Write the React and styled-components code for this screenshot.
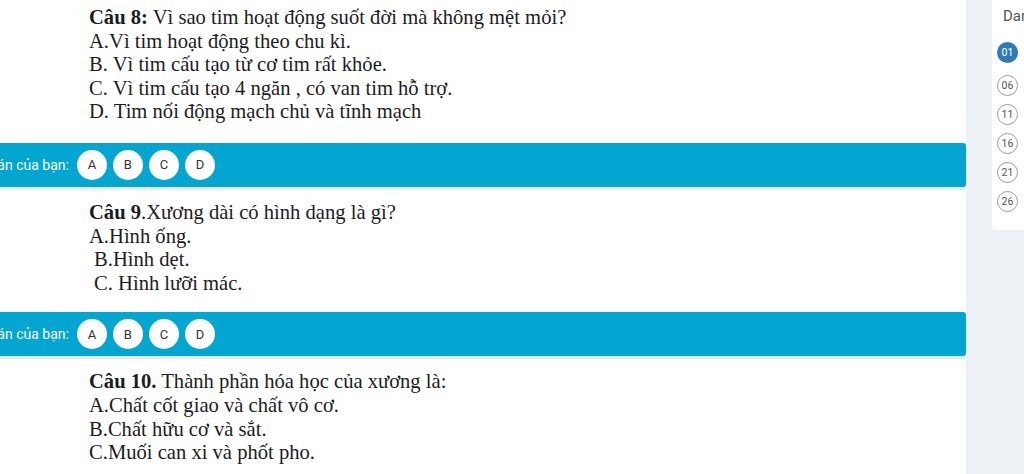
import React from "react";
import styled, { createGlobalStyle } from "styled-components";

const Global = createGlobalStyle`
  html, body { margin: 0; padding: 0; background: #ffffff; }
  body { width: 1024px; height: 474px; overflow: hidden; }
  #root { width: 1024px; height: 474px; }
`;

const Page = styled.div`
  display: flex;
  width: 1024px;
  height: 474px;
  overflow: hidden;
`;

const Main = styled.main`
  width: 966px;
  flex: none;
  background: #ffffff;
  overflow: hidden;
`;

const Inner = styled.div`
  margin-left: -31px;
  display: flex;
  flex-direction: column;
`;

const Question = styled.section`
  padding: ${(p) => p.$pt}px 0 ${(p) => p.$pb}px 120px;
  font-family: "Liberation Serif", "Times New Roman", serif;
  font-size: 20.6px;
  line-height: 23.6px;
  color: #1c1c1c;
`;

const Line = styled.div`
  padding-left: ${(p) => p.$indent || 0}px;
  white-space: nowrap;
`;

const Bold = styled.b`
  font-weight: 700;
`;

const AnswerBar = styled.div`
  height: 44px;
  background: #02a6d1;
  border-radius: 0 3px 3px 0;
  display: flex;
  align-items: center;
  gap: 6px;
  box-shadow: 0 3px 0 #e4eef2;
  margin-bottom: 3px;
`;

const BarLabel = styled.span`
  font-family: Roboto, "Noto Sans", sans-serif;
  font-size: 14px;
  color: #ffffff;
  margin-right: 2px;
  white-space: nowrap;
`;

const Choice = styled.span`
  width: 30px;
  height: 30px;
  border-radius: 50%;
  background: #ffffff;
  display: flex;
  align-items: center;
  justify-content: center;
  font-family: Roboto, "Noto Sans", sans-serif;
  font-size: 13px;
  color: #333333;
`;

const Side = styled.aside`
  flex: 1;
  background: #edf0f4;
  padding-left: 26px;
`;

const Card = styled.div`
  background: #ffffff;
  height: 230px;
  border-radius: 0 0 0 4px;
  padding: 7px 0 0 5px;
  box-sizing: border-box;
  overflow: hidden;
`;

const CardTitle = styled.div`
  font-family: Roboto, "Noto Sans", sans-serif;
  font-size: 15px;
  color: #555;
  padding-left: 6px;
  white-space: nowrap;
  height: 19px;
  margin-bottom: 16px;
`;

const NumList = styled.div`
  display: flex;
  flex-direction: column;
  gap: 8px;
`;

const Num = styled.span`
  width: 21px;
  height: 21px;
  box-sizing: border-box;
  border-radius: 50%;
  display: flex;
  align-items: center;
  justify-content: center;
  font-family: Roboto, "Noto Sans", sans-serif;
  font-size: 10.5px;
  color: ${(p) => (p.$active ? "#ffffff" : "#555")};
  background: ${(p) => (p.$active ? "#2e7bb5" : "#ffffff")};
  border: ${(p) => (p.$active ? "none" : "1px solid #9a9a9a")};
  margin-bottom: ${(p) => (p.$active ? 4 : 0)}px;
`;

const Answer = () => (
  <AnswerBar>
    <BarLabel>Đáp án của bạn:</BarLabel>
    {["A", "B", "C", "D"].map((l) => (
      <Choice key={l}>{l}</Choice>
    ))}
  </AnswerBar>
);

export default function App() {
  return (
    <Page>
      <Global />
      <Main>
        <Inner>
          <Question $pt={6} $pb={19}>
            <Line>
              <Bold>Câu 8:</Bold> Vì sao tim hoạt động suốt đời mà không mệt mỏi?
            </Line>
            <Line>A.Vì tim hoạt động theo chu kì.</Line>
            <Line>B. Vì tim cấu tạo từ cơ tim rất khỏe.</Line>
            <Line>C. Vì tim cấu tạo 4 ngăn , có van tim hỗ trợ.</Line>
            <Line>D. Tim nối động mạch chủ và tĩnh mạch</Line>
          </Question>
          <Answer />
          <Question $pt={11} $pb={17}>
            <Line>
              <Bold>Câu 9</Bold>.Xương dài có hình dạng là gì?
            </Line>
            <Line>A.Hình ống.</Line>
            <Line $indent={5}>B.Hình dẹt.</Line>
            <Line $indent={5}>C. Hình lưỡi mác.</Line>
          </Question>
          <Answer />
          <Question $pt={11} $pb={10}>
            <Line>
              <Bold>Câu 10.</Bold> Thành phần hóa học của xương là:
            </Line>
            <Line>A.Chất cốt giao và chất vô cơ.</Line>
            <Line>B.Chất hữu cơ và sắt.</Line>
            <Line>C.Muối can xi và phốt pho.</Line>
          </Question>
        </Inner>
      </Main>
      <Side>
        <Card>
          <CardTitle>Danh sách câu hỏi</CardTitle>
          <NumList>
            <Num $active>01</Num>
            <Num>06</Num>
            <Num>11</Num>
            <Num>16</Num>
            <Num>21</Num>
            <Num>26</Num>
          </NumList>
        </Card>
      </Side>
    </Page>
  );
}
